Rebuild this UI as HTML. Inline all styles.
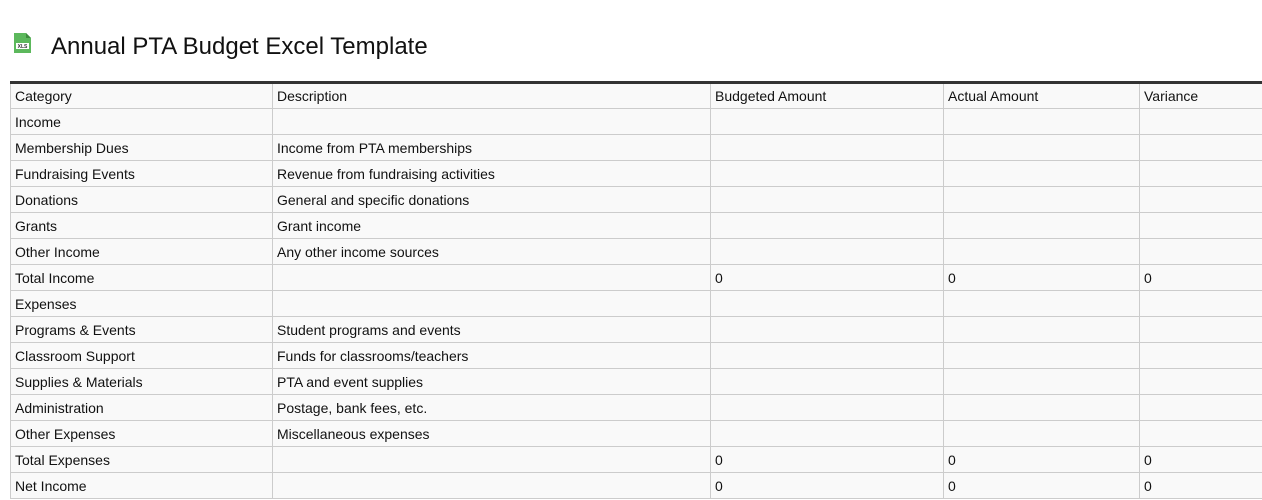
<!DOCTYPE html>
<html><head><style>
body{margin:0;background:#fff;font-family:"Liberation Sans",Arial,sans-serif;}
h1{position:absolute;left:51px;top:34px;margin:0;font-size:24px;line-height:26px;font-weight:normal;color:#111;}
.icon{position:absolute;left:13px;top:33px;}
table{position:absolute;left:10px;top:81px;width:1252px;border-collapse:collapse;border-top:3px solid #333;table-layout:fixed;}
td{border:1px solid #ccc;background:#f9f9f9;height:26px;padding:0 4px;font-size:14px;color:#111;box-sizing:border-box;}
</style></head><body>
<svg class="icon" width="19" height="20" viewBox="0 0 19 20"><path d="M1 0h12l5 5v15H1z" fill="#5cb85c"/><path d="M13 0v5h5" fill="#3d8b3d"/><rect x="3" y="10" width="13" height="6" fill="#fff"/><text x="9.5" y="15" font-size="5" text-anchor="middle" font-family="Liberation Sans" font-weight="bold" fill="#333">XLS</text></svg>
<h1>Annual PTA Budget Excel Template</h1>
<table>
<colgroup><col style="width:262px"><col style="width:438px"><col style="width:233px"><col style="width:196px"><col style="width:123px"></colgroup>
<tr><td>Category</td><td>Description</td><td>Budgeted Amount</td><td>Actual Amount</td><td>Variance</td></tr>
<tr><td>Income</td><td></td><td></td><td></td><td></td></tr>
<tr><td>Membership Dues</td><td>Income from PTA memberships</td><td></td><td></td><td></td></tr>
<tr><td>Fundraising Events</td><td>Revenue from fundraising activities</td><td></td><td></td><td></td></tr>
<tr><td>Donations</td><td>General and specific donations</td><td></td><td></td><td></td></tr>
<tr><td>Grants</td><td>Grant income</td><td></td><td></td><td></td></tr>
<tr><td>Other Income</td><td>Any other income sources</td><td></td><td></td><td></td></tr>
<tr><td>Total Income</td><td></td><td>0</td><td>0</td><td>0</td></tr>
<tr><td>Expenses</td><td></td><td></td><td></td><td></td></tr>
<tr><td>Programs &amp; Events</td><td>Student programs and events</td><td></td><td></td><td></td></tr>
<tr><td>Classroom Support</td><td>Funds for classrooms/teachers</td><td></td><td></td><td></td></tr>
<tr><td>Supplies &amp; Materials</td><td>PTA and event supplies</td><td></td><td></td><td></td></tr>
<tr><td>Administration</td><td>Postage, bank fees, etc.</td><td></td><td></td><td></td></tr>
<tr><td>Other Expenses</td><td>Miscellaneous expenses</td><td></td><td></td><td></td></tr>
<tr><td>Total Expenses</td><td></td><td>0</td><td>0</td><td>0</td></tr>
<tr><td>Net Income</td><td></td><td>0</td><td>0</td><td>0</td></tr>
</table>
</body></html>
